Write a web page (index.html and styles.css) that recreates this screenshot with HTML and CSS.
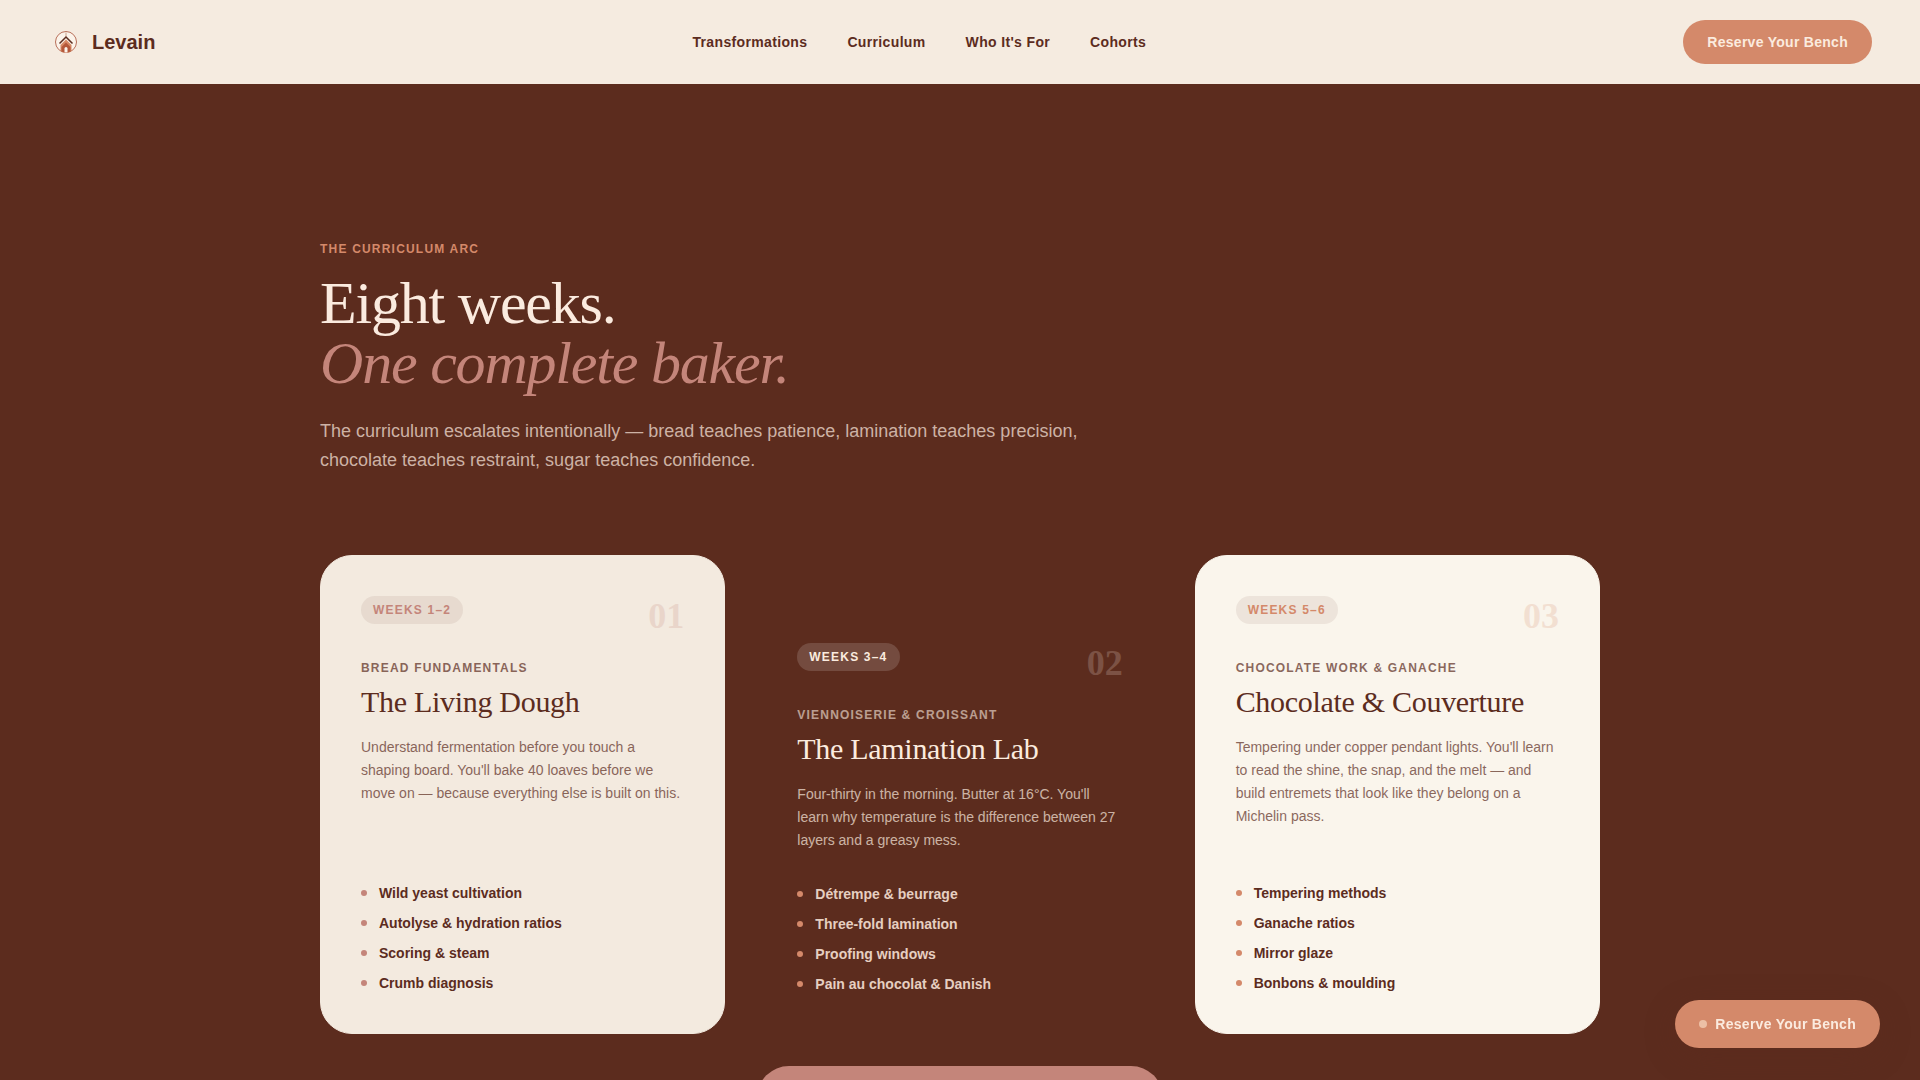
FILE: index.html
```html
<!DOCTYPE html>
<html lang="en">
<head>
<meta charset="utf-8">
<title>Levain</title>
<link rel="stylesheet" href="styles.css">
</head>

<body>

<header class="nav">
	<a class="brand" href="#">
		<svg class="logo" viewBox="0 0 36 36">
			<circle cx="18" cy="18" r="10.5" fill="#fbf3ea" stroke="#b9705a" stroke-width="1"/>
			<path d="M18 8.500v4" stroke="#c9a28c" stroke-width="1"/>
			<path d="M12.500 21l5.500-5.500 5.500 5.500v6a10 10 0 0 1-11 0z" fill="#d88a66"/>
			<path d="M13.500 23l4.500-4.500 4.500 4.500v4.500a10 10 0 0 1-9 0z" fill="#b4583a"/>
			<path d="M11.500 19.500l6.500-6.500 6.500 6.500" fill="none" stroke="#5c2c1e" stroke-width="1.500"/>
			<path d="M16.500 28.500v-4a1.500 1.500 0 0 1 3 0v4z" fill="#fbf3ea"/>
		</svg>
		<span>Levain</span>
	</a>
	<nav class="links">
		<a href="#transformations">Transformations</a>
		<a href="#curriculum">Curriculum</a>
		<a href="#who">Who It's For</a>
		<a href="#cohorts">Cohorts</a>
	</nav>
	<button type="button" class="btn">Reserve Your Bench</button>
</header>

<main class="curriculum" id="curriculum">
	<div class="intro">
		<p class="eyebrow">The Curriculum Arc</p>
		<h1>Eight weeks.<br><em>One complete baker.</em></h1>
		<p class="lead">The curriculum escalates intentionally — bread teaches patience, lamination teaches precision, chocolate teaches restraint, sugar teaches confidence.</p>
	</div>

	<div class="grid">
		<article class="card cream">
			<div class="card-top">
				<span class="weeks">Weeks 1–2</span>
				<span class="num">01</span>
			</div>
			<p class="topic">Bread Fundamentals</p>
			<h2>The Living Dough</h2>
			<p class="desc">Understand fermentation before you touch a shaping board. You'll bake 40 loaves before we move on — because everything else is built on this.</p>
			<ul>
				<li>Wild yeast cultivation</li>
				<li>Autolyse &amp; hydration ratios</li>
				<li>Scoring &amp; steam</li>
				<li>Crumb diagnosis</li>
			</ul>
		</article>

		<article class="card dark">
			<div class="card-top">
				<span class="weeks">Weeks 3–4</span>
				<span class="num">02</span>
			</div>
			<p class="topic">Viennoiserie &amp; Croissant</p>
			<h2>The Lamination Lab</h2>
			<p class="desc">Four-thirty in the morning. Butter at 16°C. You'll learn why temperature is the difference between 27 layers and a greasy mess.</p>
			<ul>
				<li>Détrempe &amp; beurrage</li>
				<li>Three-fold lamination</li>
				<li>Proofing windows</li>
				<li>Pain au chocolat &amp; Danish</li>
			</ul>
		</article>

		<article class="card light">
			<div class="card-top">
				<span class="weeks">Weeks 5–6</span>
				<span class="num">03</span>
			</div>
			<p class="topic">Chocolate Work &amp; Ganache</p>
			<h2>Chocolate &amp; Couverture</h2>
			<p class="desc">Tempering under copper pendant lights. You'll learn to read the shine, the snap, and the melt — and build entremets that look like they belong on a Michelin pass.</p>
			<ul>
				<li>Tempering methods</li>
				<li>Ganache ratios</li>
				<li>Mirror glaze</li>
				<li>Bonbons &amp; moulding</li>
			</ul>
		</article>

		<article class="card rose"></article>
	</div>
</main>

<button type="button" class="btn float"><i class="dot"></i>Reserve Your Bench</button>

</body>
</html>
```

FILE: styles.css
```css
*{
	margin:0;
	padding:0;
	box-sizing:border-box;
	}
html,body{
	height:100%;
	}
body{
	display:flex;
	flex-direction:column;
	overflow:hidden;
	background:#5c2c1e;
	color:#5c2c1e;
	font-family:"Liberation Sans",Arial,sans-serif;
	}
a{
	color:inherit;
	text-decoration:none;
	}

/* top bar */
.nav{
	display:flex;
	flex-shrink:0;
	align-items:center;
	justify-content:space-between;
	padding:20px 48px;
	background:#f5ebe0;
	}
.brand{
	display:flex;
	align-items:center;
	gap:8px;
	font-size:20px;
	font-weight:bold;
	}
.logo{
	width:36px;
	height:36px;
	}
.links{
	display:flex;
	gap:40px;
	font-size:14px;
	font-weight:bold;
	letter-spacing:0.025em;
	}
.btn{
	height:44px;
	padding:0 24px;
	border:0;
	border-radius:24px;
	background:#d4896a;
	color:#fbebdf;
	font-family:inherit;
	font-size:14px;
	font-weight:bold;
	letter-spacing:0.02em;
	cursor:pointer;
	}

/* curriculum */
.curriculum{
	flex:1;
	width:100%;
	max-width:1360px;
	margin:0 auto;
	padding:157px 40px 0;
	}
.eyebrow,.topic,.weeks{
	font-size:12px;
	font-weight:bold;
	line-height:16px;
	letter-spacing:0.1em;
	text-transform:uppercase;
	}
.eyebrow{
	color:#d4896a;
	}
h1,h2{
	font-family:"Liberation Serif","Times New Roman",serif;
	font-weight:normal;
	}
h1{
	margin-top:16px;
	font-size:60px;
	line-height:60px;
	letter-spacing:-0.02em;
	color:#fbebdf;
	}
h1 em{
	color:#c4857a;
	}
.lead{
	max-width:768px;
	margin-top:24px;
	font-size:18px;
	line-height:29px;
	color:#cdb2a5;
	}
.grid{
	display:grid;
	grid-template-columns:repeat(3,1fr);
	gap:32px;
	margin-top:80px;
	}
.card{
	display:flex;
	flex-direction:column;
	padding:40px;
	border-radius:32px;
	}
.card-top{
	display:flex;
	align-items:flex-start;
	justify-content:space-between;
	margin-bottom:24px;
	}
.weeks{
	padding:6px 12px;
	border-radius:14px;
	background:rgba(92,44,30,0.08);
	}
.num{
	font-family:"Liberation Serif","Times New Roman",serif;
	font-size:36px;
	font-weight:bold;
	line-height:40px;
	opacity:0.2;
	}
.topic{
	opacity:0.7;
	}
h2{
	margin:8px 0 16px;
	font-size:30px;
	line-height:36px;
	letter-spacing:-0.01em;
	}
.desc{
	margin-bottom:32px;
	font-size:14px;
	line-height:23px;
	opacity:0.7;
	}
.card ul{
	display:flex;
	flex-direction:column;
	gap:10px;
	margin-top:auto;
	list-style:none;
	}
.card li{
	display:flex;
	align-items:center;
	gap:12px;
	font-size:14px;
	font-weight:bold;
	line-height:20px;
	}
.card li:before{
	content:"";
	width:6px;
	height:6px;
	border-radius:50%;
	background:#d4896a;
	}

.cream{
	border:1px solid #f3eadf;
	background:#f3eadf;
	}
.cream .weeks,.cream .num{
	color:#c4857a;
	}
.cream li:before{
	background:#c4857a;
	}
.dark{
	margin-top:48px;
	color:#fbebdf;
	}
.dark .weeks{
	background:rgba(255,255,255,0.15);
	}
.dark .topic{
	opacity:0.6;
	}
.dark li{
	color:#e6cfc1;
	}
.light{
	border:1px solid #faf5ec;
	background:#faf5ec;
	}
.light .weeks,.light .num{
	color:#d4896a;
	}
.rose{
	grid-column:2;
	height:430px;
	background:#c4857a;
	}

/* floating button */
.float{
	position:fixed;
	right:40px;
	bottom:32px;
	display:flex;
	align-items:center;
	gap:8px;
	height:48px;
	box-shadow:0 8px 32px rgba(92,44,30,0.3);
	}
.dot{
	width:8px;
	height:8px;
	border-radius:50%;
	background:#ecc0a6;
	}
```
